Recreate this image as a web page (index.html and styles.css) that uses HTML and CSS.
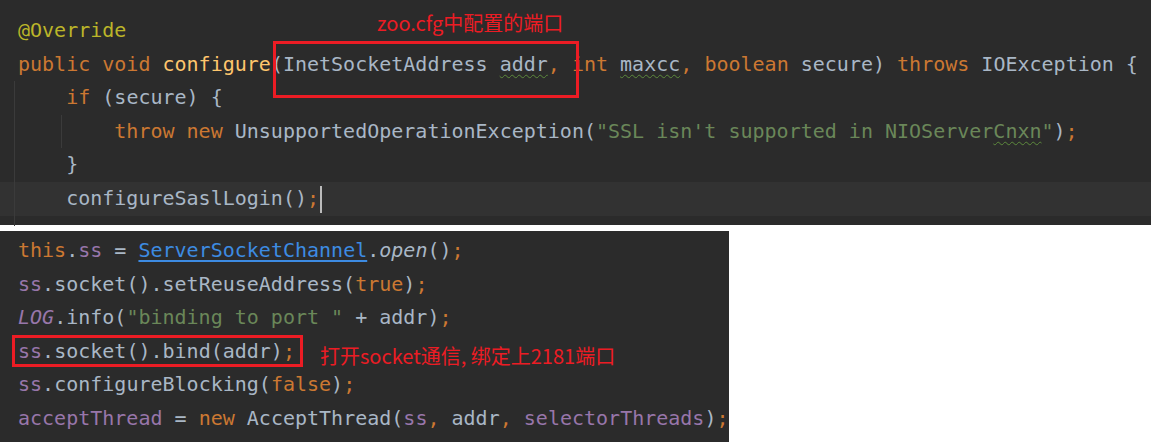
FILE: index.html
```html
<!DOCTYPE html>
<html lang="zh">
<head>
<meta charset="utf-8">
<title>configure</title>
<link rel="stylesheet" href="styles.css">
</head>
<body>
<div class="shot top">
  <div class="ln"><span class="an">@Override</span></div>
  <div class="ln"><span class="kw">public void </span><span class="fn">configure</span>(InetSocketAddress <span class="wv">addr</span><span class="kw">, int </span><span class="wv">maxcc</span><span class="kw">, boolean </span>secure) <span class="kw">throws </span>IOException {</div>
  <div class="ln g">    <span class="kw">if </span>(secure) {</div>
  <div class="ln g ig">        <span class="kw">throw new </span>UnsupportedOperationException(<span class="st">"SSL isn't supported in NIOServer<span class="wv">Cnxn</span>"</span>)<span class="kw">;</span></div>
  <div class="ln g">    }</div>
  <div class="ln g cur">    configureSaslLogin()<span class="kw">;</span><span class="caret"></span></div>
  <div class="tail g"></div>
  <div class="box box1"></div>
  <div class="note note1">zoo.cfg中配置的端口</div>
</div>
<div class="gap"></div>
<div class="shot bottom">
  <div class="ln"><span class="kw">this</span>.<span class="fd">ss</span> = <span class="lk">ServerSocketChannel</span>.<span class="it">open</span>()<span class="kw">;</span></div>
  <div class="ln"><span class="fd">ss</span>.socket().setReuseAddress(<span class="kw">true</span>)<span class="kw">;</span></div>
  <div class="ln"><span class="fd it">LOG</span>.info(<span class="st">"binding to port "</span> + addr)<span class="kw">;</span></div>
  <div class="ln"><span class="fd">ss</span>.socket().bind(addr)<span class="kw">;</span></div>
  <div class="ln"><span class="fd">ss</span>.configureBlocking(<span class="kw">false</span>)<span class="kw">;</span></div>
  <div class="ln"><span class="fd">acceptThread</span> = <span class="kw">new </span>AcceptThread(<span class="fd">ss</span><span class="kw">, </span>addr<span class="kw">, </span><span class="fd">selectorThreads</span>)<span class="kw">;</span></div>
  <div class="box box2"></div>
  <div class="note note2">打开socket通信, 绑定上2181端口</div>
</div>
</body>
</html>
```

FILE: styles.css
```css
html, body {
  margin: 0;
  padding: 0;
  background: #ffffff;
}
body {
  width: 1151px;
  height: 442px;
  overflow: hidden;
}
.shot {
  position: relative;
  background: #2b2b2b;
  color: #a9b7c6;
  font-family: "DejaVu Sans Mono", "Liberation Mono", monospace;
  font-size: 20px;
}
.top {
  width: 1151px;
  height: 225px;
  padding-top: 14px;
  box-sizing: border-box;
}
.gap {
  height: 6px;
}
.bottom {
  width: 729px;
  height: 211px;
  padding-top: 3px;
  box-sizing: border-box;
}
.ln {
  height: 33.6px;
  line-height: 33.6px;
  padding-left: 18px;
  white-space: pre;
}
.g {
  background: linear-gradient(#3b3b3b, #3b3b3b) 14px 0 / 1px 100% no-repeat;
}
.g.ig {
  background:
    linear-gradient(#3b3b3b, #3b3b3b) 14px 0 / 1px 100% no-repeat,
    linear-gradient(#3b3b3b, #3b3b3b) 61px 0 / 1px 100% no-repeat;
}
.g.cur {
  background:
    linear-gradient(#3b3b3b, #3b3b3b) 14px 0 / 1px 100% no-repeat,
    #323232;
}
.tail {
  height: 10px;
}
.kw { color: #cc7832; }
.an { color: #bbb529; }
.fn { color: #ffc66d; }
.st { color: #6a8759; }
.fd { color: #9876aa; }
.it { font-style: italic; }
.lk {
  color: #3d8be2;
  text-decoration: underline;
  text-decoration-color: #3d8be2;
  text-underline-offset: 3px;
}
.wv {
  text-decoration: underline wavy #5d8a3c;
  text-decoration-thickness: 1px;
  text-underline-offset: 3px;
}
.caret {
  display: inline-block;
  width: 2px;
  height: 27px;
  background: #bbbbbb;
  vertical-align: middle;
  margin-left: 1px;
}
.box {
  position: absolute;
  box-sizing: border-box;
  border: 3px solid #ec1c24;
}
.box1 {
  left: 273px;
  top: 41px;
  width: 306px;
  height: 57px;
}
.box2 {
  left: 12px;
  top: 104px;
  width: 291px;
  height: 32px;
}
.note {
  position: absolute;
  color: #ec1c24;
  font-family: "Noto Sans CJK SC", "Noto Sans", sans-serif;
  font-size: 20px;
  line-height: 26px;
  white-space: nowrap;
}
.note1 {
  left: 377px;
  top: 10px;
}
.note2 {
  left: 320px;
  top: 112px;
}
```
